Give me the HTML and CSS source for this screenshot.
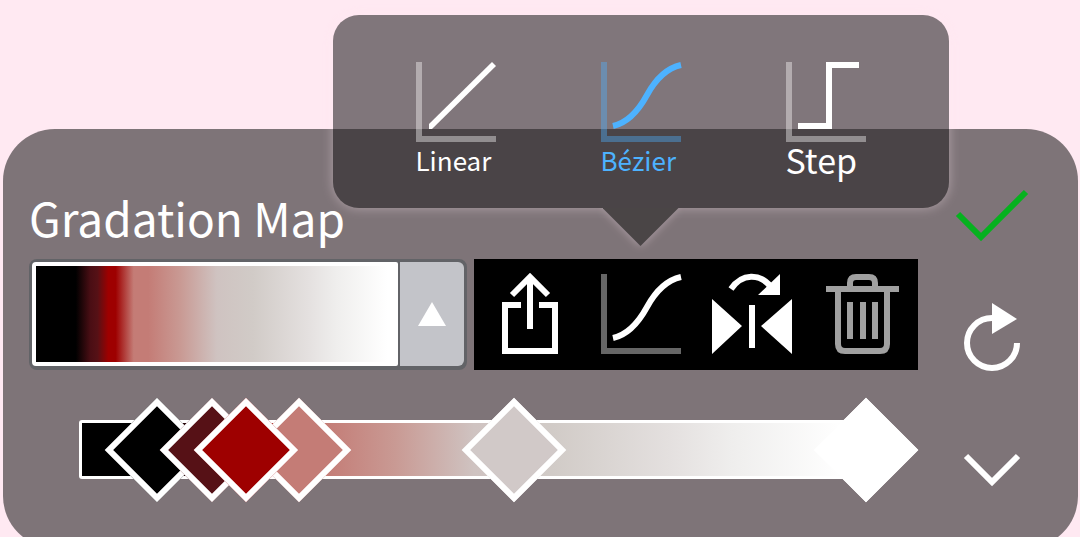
FILE: index.html
```html
<!DOCTYPE html>
<html lang="en">
<head>
    <meta charset="UTF-8">
    <meta name="viewport" content="width=device-width, initial-scale=1">
    <title>Gradation Map</title>
    <link rel="stylesheet" href="styles.css">
</head>
<body>
    <main class="panel">
        <div class="editor">
            <h1>Gradation Map</h1>

            <div class="tools-row">
                <button class="preset" type="button" aria-label="Choose gradient preset" aria-haspopup="listbox">
                    <span class="preset-swatch"><span class="gradient"></span></span>
                    <span class="preset-arrow">
                        <svg viewBox="0 0 28 24"><path d="M14 0L28 24H0Z"/></svg>
                    </span>
                </button>

                <div class="toolbar">
                    <button class="tool" type="button" aria-label="Export">
                        <svg class="icon" viewBox="0 0 80 80">
                            <path class="line" d="M31 31H15V77H65V31H49M40 55V3M22 21L40 3L58 21"/>
                        </svg>
                    </button>

                    <div class="tool-anchor">
                        <button class="tool" type="button" aria-label="Interpolation" aria-expanded="true">
                            <svg class="icon" viewBox="0 0 80 80">
                                <path class="line axis" d="M3 0V77H80"/>
                                <path class="line" d="M12 64C30 60 40 44 46 33S62 7 80 3"/>
                            </svg>
                        </button>

                        <!-- interpolation menu -->
                        <div class="popup">
                            <button class="mode" type="button">
                                <svg class="icon" viewBox="0 0 80 80">
                                    <path class="line axis" d="M3 0V77H80"/>
                                    <path d="M13 62L76 0L80 4L16 67H13Z"/>
                                </svg>
                                <span>Linear</span>
                            </button>
                            <button class="mode active" type="button">
                                <svg class="icon" viewBox="0 0 80 80">
                                    <path class="line axis" d="M3 0V77H80"/>
                                    <path class="line" d="M12 64C30 60 40 44 46 33S62 7 80 3"/>
                                </svg>
                                <span>Bézier</span>
                            </button>
                            <button class="mode large" type="button">
                                <svg class="icon" viewBox="0 0 80 80">
                                    <path class="line axis" d="M3 0V77H80"/>
                                    <path class="line" d="M12 64H43V3H73"/>
                                </svg>
                                <span>Step</span>
                            </button>
                            <div class="popup-tail"><i></i></div>
                        </div>
                    </div>

                    <button class="tool" type="button" aria-label="Reverse">
                        <svg class="icon" viewBox="0 0 80 80">
                            <path d="M0 25V80L30 52ZM80 25V80L49 52ZM37 31H43V74H37ZM68 0V21H46Z"/>
                            <path class="line" d="M19 15C30 -1 48 -1 59 13"/>
                        </svg>
                    </button>

                    <button class="tool muted" type="button" aria-label="Delete">
                        <svg class="icon" viewBox="0 0 80 80">
                            <path class="line" d="M3 15H76M27 13V9Q27 3 33 3H46Q52 3 52 9V13M15 18V70Q15 77 22 77H57Q64 77 64 70V18M27 28V65M40 28V65M52 28V65"/>
                        </svg>
                    </button>
                </div>
            </div>

            <div class="track">
                <div class="gradient"></div>
                <input class="stop" type="range" step="0.1" value="9.9" aria-label="Stop 1" style="--color: #000000">
                <input class="stop" type="range" step="0.1" value="16.9" aria-label="Stop 2" style="--color: #561116">
                <input class="stop" type="range" step="0.1" value="27.9" aria-label="Stop 4" style="--color: #c47c76">
                <input class="stop" type="range" step="0.1" value="21.2" aria-label="Stop 3" style="--color: #9e0000">
                <input class="stop" type="range" step="0.1" value="55.3" aria-label="Stop 5" style="--color: #d1c9c8">
                <input class="stop" type="range" step="0.1" value="100" aria-label="Stop 6" style="--color: #ffffff">
            </div>
        </div>

        <div class="actions">
            <button class="action confirm" type="button" aria-label="Apply">
                <svg class="icon" viewBox="0 0 80 80"><path class="line" d="M6 39L29 62L74 17"/></svg>
            </button>
            <button class="action" type="button" aria-label="Reset">
                <svg class="icon" viewBox="0 0 80 80">
                    <path class="line" d="M65 41A25 25 0 1 1 40 16"/>
                    <path d="M40 1L65 17L40 32Z"/>
                </svg>
            </button>
            <button class="action" type="button" aria-label="Collapse">
                <svg class="icon" viewBox="0 0 80 80"><path class="line" d="M14 27L40 53L66 27"/></svg>
            </button>
        </div>
    </main>
</body>
</html>
```

FILE: styles.css
```css
* {
    box-sizing: border-box;
}
body {
    margin: 0;
    height: 100vh;
    padding: 129px 2px 0 3px;
    overflow: hidden;
    background: #ffe9f2;
    color: #fff;
    font-family: "Noto Sans CJK JP", "Noto Sans", sans-serif;
}
button {
    display: flex;
    padding: 0;
    border: none;
    background: none;
    color: inherit;
    font: inherit;
    cursor: pointer;
}
.panel {
    display: grid;
    grid-template-columns: minmax(0, 1fr) 148px;
    min-height: calc(100vh - 118px);
    padding: 46px 12px 0 26px;
    border-radius: 52px;
    background: #7e7478;
}
h1 {
    margin: 0;
    font-size: 46px;
    font-weight: 400;
    line-height: 84px;
}

/* icons */
.icon {
    display: block;
    width: 80px;
    height: 80px;
    overflow: visible;
    fill: currentColor;
}
.line {
    fill: none;
    stroke: currentColor;
    stroke-width: 6;
}
.axis {
    opacity: 0.4;
}

/* preset picker */
.tools-row {
    display: flex;
    gap: 7px;
}
.preset {
    flex: 1;
    gap: 2px;
    height: 111px;
    border: 3px solid #626367;
    border-bottom-width: 4px;
    border-radius: 8px;
    background: #626367;
}
.preset-swatch {
    display: flex;
    flex: 1;
    align-self: stretch;
    padding: 4px 0 4px 4px;
    border-radius: 4px 2px 2px 4px;
    background: #fff;
}
.preset-arrow {
    display: flex;
    align-items: center;
    justify-content: center;
    align-self: stretch;
    width: 64px;
    border-radius: 0 6px 6px 0;
    background: #c3c4c9;
}
.preset-arrow svg {
    width: 28px;
    height: 24px;
    fill: #fff;
}
.gradient {
    flex: 1;
    background: linear-gradient(to right,
        #000 0%, #000 11%, #4a0e14 15%, #561116 17%, #9e0000 20%, #9e0000 22%,
        #c47c76 27%, #c47c76 31%, #c99a94 40%, #cfc3c1 50%, #d1cbc7 60%,
        #e4e0df 75%, #efeeed 83%, #fff 97%);
}

/* toolbar */
.toolbar {
    display: grid;
    grid-template-columns: repeat(4, 111px);
    background: #000;
}
.tool {
    align-items: center;
    justify-content: center;
    width: 100%;
    height: 110px;
}
.muted {
    color: #a0a0a0;
}
.tool-anchor {
    position: relative;
}

/* popup */
.popup {
    position: absolute;
    bottom: calc(100% + 51px);
    left: 50%;
    transform: translateX(-50%);
    display: flex;
    gap: 105px;
    padding: 47px 83px 30px;
    border-radius: 26px;
    background: rgba(36, 35, 36, 0.58);
    box-shadow: 0 0 12px rgba(255, 233, 242, 0.4);
}
.mode {
    flex-direction: column;
    align-items: flex-start;
    width: 80px;
    font-size: 26px;
    line-height: 36px;
}
.mode.active {
    color: #4db2ff;
}
.mode.large {
    font-size: 34px;
}
.popup-tail {
    position: absolute;
    top: 100%;
    left: 50%;
    width: 76px;
    height: 38px;
    margin-left: -38px;
    filter: drop-shadow(0 0 5px rgba(255, 233, 242, 0.4));
    clip-path: inset(0 -16px -16px);
}
.popup-tail i {
    display: block;
    height: 100%;
    background: #4a4546;
    clip-path: polygon(0 0, 100% 0, 50% 100%);
}

/* gradient track */
.track {
    position: relative;
    display: flex;
    height: 59px;
    margin: 50px 52px 0 50px;
    padding: 3px 0 3px 3px;
    border-radius: 3px;
    background: #fff;
}
.stop {
    position: absolute;
    top: 50%;
    left: -37px;
    width: calc(100% + 74px);
    height: 74px;
    margin: -37px 0 0;
    appearance: none;
    background: none;
    pointer-events: none;
}
.stop::-webkit-slider-thumb {
    appearance: none;
    box-sizing: border-box;
    width: 74px;
    height: 74px;
    border: 6px solid #fff;
    background: var(--color);
    transform: rotate(45deg);
    pointer-events: auto;
    cursor: pointer;
}

/* side actions */
.actions {
    display: flex;
    flex-direction: column;
    align-items: center;
    gap: 47px;
}
.confirm {
    color: #06b11f;
}
```
